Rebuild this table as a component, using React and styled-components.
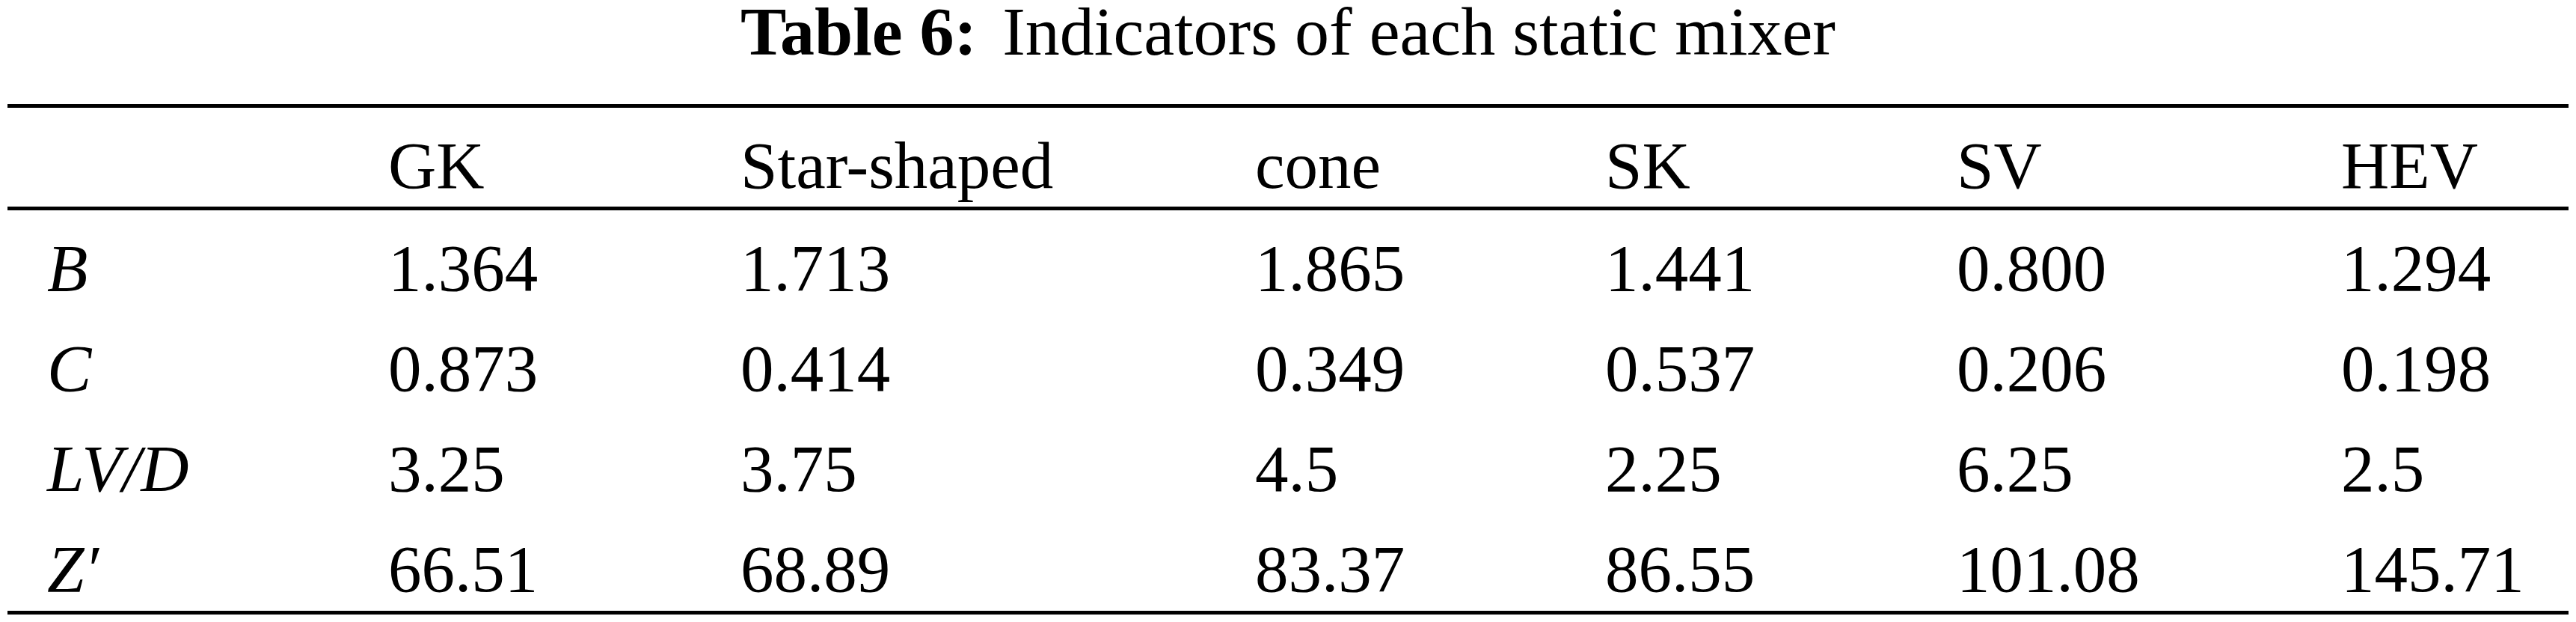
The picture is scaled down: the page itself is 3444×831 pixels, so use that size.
import React from 'react';
import styled, { createGlobalStyle } from 'styled-components';

const GlobalStyle = createGlobalStyle`
  html, body {
    margin: 0;
    padding: 0;
    background: #fff;
  }
  body {
    width: 3444px;
    height: 831px;
    overflow: hidden;
    font-family: "Liberation Serif", "Times New Roman", serif;
    color: #000;
  }
`;

const Page = styled.div`
  padding: 0 10px;
`;

const Caption = styled.div`
  font-size: 92px;
  line-height: 84px;
  height: 84px;
  text-align: center;
  margin-bottom: 55px;
  white-space: pre;
`;

const CaptionLabel = styled.span`
  font-weight: bold;
`;

const CaptionText = styled.span`
  margin-left: 34px;
`;

const Table = styled.div`
  border-top: 5px solid #000;
  border-bottom: 5px solid #000;
`;

const Head = styled.div`
  border-bottom: 5px solid #000;
  padding: 22px 0 0;
`;

const Body = styled.div`
  display: flex;
  flex-direction: column;
  gap: 24px;
  padding: 22px 0 1px;
`;

const Row = styled.div`
  display: grid;
  grid-template-columns: 509px 471px 688px 468px 470px 514px 1fr;
  font-size: 89px;
  line-height: 110px;
  height: 110px;
  white-space: nowrap;
`;

const Cell = styled.div`
  padding-left: ${p => (p.$first ? '53px' : '0')};
  font-style: ${p => (p.$italic ? 'italic' : 'normal')};
`;

const columns = ['GK', 'Star-shaped', 'cone', 'SK', 'SV', 'HEV'];

const rows = [
  { label: 'B', values: ['1.364', '1.713', '1.865', '1.441', '0.800', '1.294'] },
  { label: 'C', values: ['0.873', '0.414', '0.349', '0.537', '0.206', '0.198'] },
  { label: 'LV/D', values: ['3.25', '3.75', '4.5', '2.25', '6.25', '2.5'] },
  { label: 'Z\u2032', values: ['66.51', '68.89', '83.37', '86.55', '101.08', '145.71'] },
];

export default function App() {
  return (
    <Page>
      <GlobalStyle />
      <Caption>
        <CaptionLabel>Table 6:</CaptionLabel>
        <CaptionText>Indicators of each static mixer</CaptionText>
      </Caption>
      <Table>
        <Head>
          <Row>
            <Cell $first />
            {columns.map(c => <Cell key={c}>{c}</Cell>)}
          </Row>
        </Head>
        <Body>
          {rows.map(r => (
            <Row key={r.label}>
              <Cell $first $italic>{r.label}</Cell>
              {r.values.map((v, i) => <Cell key={i}>{v}</Cell>)}
            </Row>
          ))}
        </Body>
      </Table>
    </Page>
  );
}
